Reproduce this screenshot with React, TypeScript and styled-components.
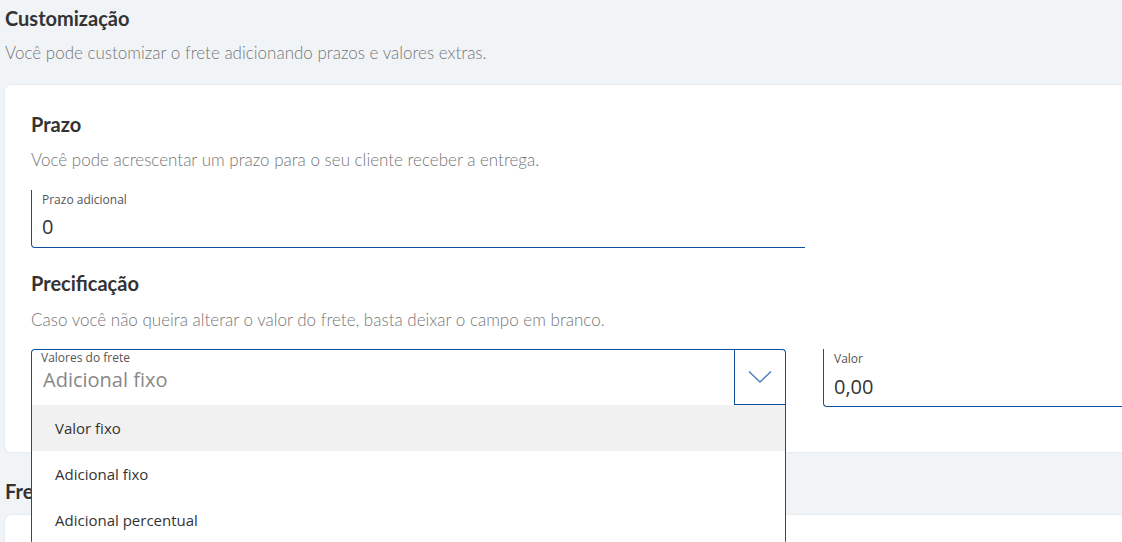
import React from 'react';
import styled, { createGlobalStyle } from 'styled-components';

const GlobalStyle = createGlobalStyle`
  html, body {
    margin: 0;
    padding: 0;
    background: #f1f4f7;
    overflow: hidden;
  }
  * {
    box-sizing: border-box;
  }
`;

const Page = styled.div`
  width: 1122px;
  height: 542px;
  overflow: hidden;
  padding: 5px 0 0 5px;
  font-family: Lato, 'Open Sans', sans-serif;
`;

const PageTitle = styled.h2`
  margin: 0;
  font-size: 20px;
  line-height: 26px;
  font-weight: 700;
  color: #333;
`;

const Description = styled.p<{ $top: number }>`
  margin: ${(p) => p.$top}px 0 0;
  font-size: 17px;
  line-height: 22px;
  font-weight: 300;
  color: #767676;
`;

const Card = styled.section<{ $height: number; $top: number }>`
  margin-top: ${(p) => p.$top}px;
  width: 1140px;
  height: ${(p) => p.$height}px;
  background: #fff;
  border-radius: 6px;
  box-shadow: 0 0 2px rgba(0, 0, 0, 0.12);
  padding: 26px 26px 0;
`;

const SectionTitle = styled.h3<{ $top?: number }>`
  margin: ${(p) => p.$top ?? 0}px 0 0;
  font-size: 20px;
  line-height: 26px;
  font-weight: 700;
  color: #333;
`;

const Field = styled.label<{ $width: number; $height: number; $top?: number }>`
  display: flex;
  flex-direction: column;
  flex-shrink: 0;
  margin-top: ${(p) => p.$top ?? 0}px;
  width: ${(p) => p.$width}px;
  height: ${(p) => p.$height}px;
  border-left: 1px solid #0d4f9c;
  border-bottom: 1px solid #0d4f9c;
  border-bottom-left-radius: 4px;
  padding: 2px 10px 0;
  font-family: 'Open Sans', sans-serif;
`;

const FieldLabel = styled.span`
  font-size: 12px;
  line-height: 16px;
  color: #555;
`;

const FieldValue = styled.span<{ $muted?: boolean; $gap?: number }>`
  margin-top: ${(p) => p.$gap ?? 7}px;
  padding-left: ${(p) => (p.$muted ? 2 : 0)}px;
  font-size: 20px;
  line-height: 26px;
  color: ${(p) => (p.$muted ? '#888' : '#333')};
`;

const FieldsRow = styled.div`
  display: flex;
  align-items: flex-start;
  gap: 37px;
  margin-top: 18px;
`;

const SelectWrap = styled.div`
  position: relative;
  flex-shrink: 0;
  width: 755px;
`;

const SelectBox = styled.div`
  display: flex;
  height: 56px;
  border: 1px solid #0d4f9c;
  border-bottom: none;
  border-radius: 4px 4px 0 0;
  font-family: 'Open Sans', sans-serif;
`;

const SelectText = styled.div`
  flex: 1;
  display: flex;
  flex-direction: column;
  padding: 0 9px;
`;

const SelectButton = styled.div`
  width: 51px;
  display: flex;
  align-items: center;
  justify-content: center;
  border-left: 1px solid #0d4f9c;
  border-bottom: 1px solid #0d4f9c;
`;

const Menu = styled.ul`
  position: absolute;
  top: 56px;
  left: 0;
  width: 755px;
  margin: 0;
  padding: 0;
  list-style: none;
  background: #fff;
  border-left: 1px solid #0d4f9c;
  border-right: 1px solid #0d4f9c;
  border-bottom: 1px solid #0d4f9c;
  border-radius: 0 0 4px 4px;
  z-index: 5;
  font-family: 'Open Sans', sans-serif;
`;

const MenuItem = styled.li<{ $active?: boolean }>`
  height: 46px;
  display: flex;
  align-items: center;
  padding-left: 23px;
  font-size: 15px;
  color: #333;
  background: ${(p) => (p.$active ? '#f1f1f1' : '#fff')};
`;

const NextTitle = styled(PageTitle)`
  margin-top: 26px;
`;

const options = ['Valor fixo', 'Adicional fixo', 'Adicional percentual'];

const App: React.FC = () => {
  return (
    <>
      <GlobalStyle />
      <Page>
        <PageTitle>Customização</PageTitle>
        <Description $top={11}>Você pode customizar o frete adicionando prazos e valores extras.</Description>

        <Card $height={367} $top={21}>
          <SectionTitle>Prazo</SectionTitle>
          <Description $top={12}>Você pode acrescentar um prazo para o seu cliente receber a entrega.</Description>
          <Field $width={774} $height={58} $top={19}>
            <FieldLabel>Prazo adicional</FieldLabel>
            <FieldValue $gap={6}>0</FieldValue>
          </Field>

          <SectionTitle $top={22}>Precificação</SectionTitle>
          <Description $top={13}>
            Caso você não queira alterar o valor do frete, basta deixar o campo em branco.
          </Description>

          <FieldsRow>
            <SelectWrap>
              <SelectBox>
                <SelectText>
                  <FieldLabel>Valores do frete</FieldLabel>
                  <FieldValue $muted $gap={1}>
                    Adicional fixo
                  </FieldValue>
                </SelectText>
                <SelectButton>
                  <svg width="24" height="14" viewBox="0 0 24 14" fill="none">
                    <path d="M1 1.5 L12 12 L23 1.5" stroke="#4a7cc0" strokeWidth="1.4" />
                  </svg>
                </SelectButton>
              </SelectBox>
              <Menu>
                {options.map((o, i) => (
                  <MenuItem key={o} $active={i === 0}>
                    {o}
                  </MenuItem>
                ))}
              </Menu>
            </SelectWrap>
            <Field $width={320} $height={58}>
              <FieldLabel>Valor</FieldLabel>
              <FieldValue>0,00</FieldValue>
            </Field>
          </FieldsRow>
        </Card>

        <NextTitle>Frete</NextTitle>
        <Card $height={60} $top={11} />
      </Page>
    </>
  );
};

export default App;
